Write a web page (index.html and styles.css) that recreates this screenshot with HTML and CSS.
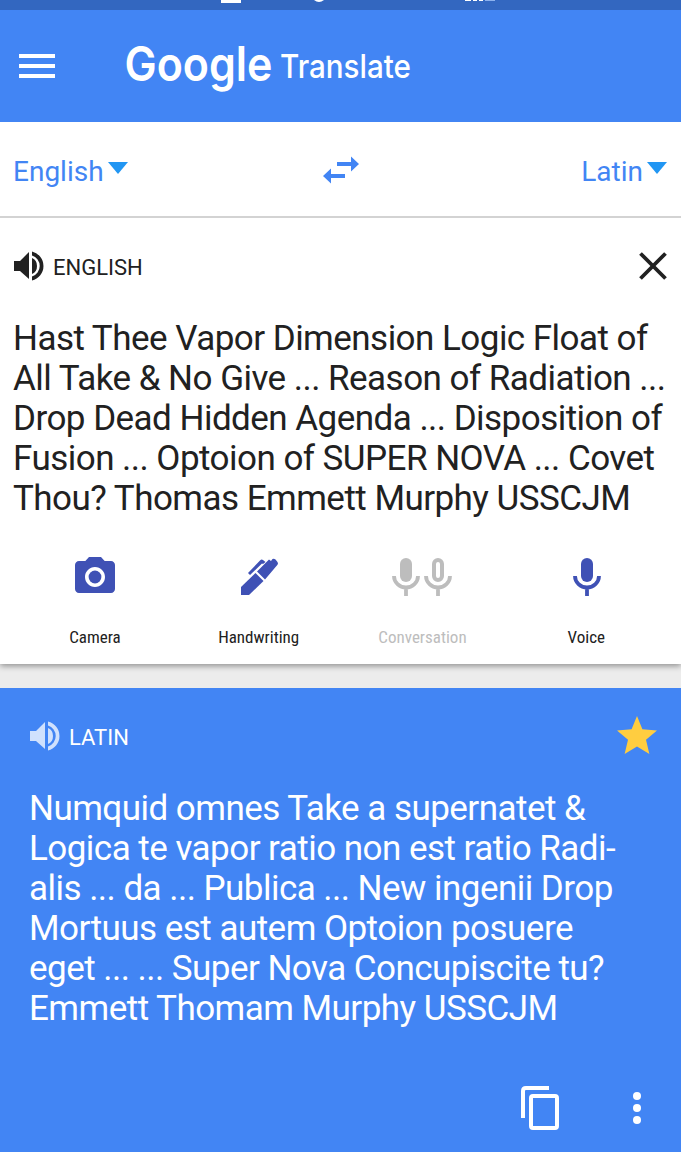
FILE: index.html
```html
<!DOCTYPE html>
<html lang="en">
<head>
    <meta charset="UTF-8">
    <meta name="viewport" content="width=device-width, initial-scale=1.0">
    <title>Google Translate</title>
    <link rel="stylesheet" href="styles.css">
</head>
<body>
    <div class="status-bar">
        <svg width="681" height="10" viewBox="0 0 681 10">
            <path fill="#fff" d="M221 0h20v3h-20zM465 0h6v1h-6zM473 0h4v1h-4zM479 0h4v1h-4z"/>
            <path fill="#fff" d="M314 0h10q-5 4-10 0z"/>
            <path fill="#8db2ee" d="M485 0h10v1h-10z"/>
        </svg>
    </div>

    <header class="app-bar">
        <svg class="menu" width="36" height="24" viewBox="0 0 36 24">
            <path fill="#fff" d="M0 0h36v4H0zM0 10h36v4H0zM0 20h36v4H0z"/>
        </svg>
        <svg class="logo" width="310" height="80" viewBox="0 0 310 80">
            <text class="google" x="2.500" y="54.500" textLength="148" lengthAdjust="spacingAndGlyphs">Google</text>
            <text class="product" x="158" y="51.500" textLength="131" lengthAdjust="spacingAndGlyphs">Translate</text>
        </svg>
    </header>

    <nav class="languages">
        <div class="lang">English<span class="caret"></span></div>
        <svg class="swap" width="36" height="28" viewBox="0 0 36 28">
            <path fill="#4285f4" d="M14 6h14V.5L36 8l-8 7.500V10H14zM22 22H8v5.500L0 20l8-7.500V18h14z"/>
        </svg>
        <div class="lang">Latin<span class="caret"></span></div>
    </nav>

    <section class="source">
        <div class="row">
            <svg class="speaker" width="30" height="30" viewBox="0 0 30 30">
                <path d="M0 10h6l9-9v27l-9-8H0zM18 7q5 2 5 8t-5 8zM18 .5a14.900 14.900 0 0 1 0 29v-4a11 11 0 0 0 0-21z"/>
            </svg>
            <span class="name">ENGLISH</span>
            <svg class="close" width="28" height="28" viewBox="0 0 28 28">
                <path d="M1.500 1.500l25 25M26.500 1.500l-25 25" stroke="#212121" stroke-width="3.800"/>
            </svg>
        </div>
        <p class="text">Hast Thee Vapor Dimension Logic Float of<br>All Take &amp; No Give ... Reason of Radiation ...<br>Drop Dead Hidden Agenda ... Disposition of<br>Fusion ... Optoion of SUPER NOVA ... Covet<br>Thou? Thomas Emmett Murphy USSCJM</p>
        <div class="tools">
            <div class="tool">
                <svg width="48" height="48" viewBox="0 0 24 24">
                    <circle cx="12" cy="12" r="3.200"/>
                    <path d="M9 2L7.170 4H4c-1.100 0-2 .9-2 2v12c0 1.100.9 2 2 2h16c1.100 0 2-.9 2-2V6c0-1.100-.9-2-2-2h-3.170L15 2H9zm3 15c-2.760 0-5-2.240-5-5s2.240-5 5-5 5 2.240 5 5-2.240 5-5 5z"/>
                </svg>
                <span>Camera</span>
            </div>
            <div class="tool">
                <svg width="48" height="48" viewBox="0 0 48 48">
                    <path d="M6 42v-8l14.500-14 8 8L14 42z"/>
                    <path d="M22 18.500l10.500-10.500 1.500-1.500 2 1.500 1.500-2q1.500-.8 3 .5l2 2.500q1 1.500 0 2.700L30 26.500z"/>
                    <path d="M15 22l-2-2L25 7.500Q26.500 6 28 7l2.500 2-2.500 2-1-.5z"/>
                </svg>
                <span>Handwriting</span>
            </div>
            <div class="tool disabled">
                <svg width="64" height="48" viewBox="0 0 64 48">
                    <rect x="10" y="5" width="12" height="24" rx="6"/>
                    <rect x="44" y="7" width="8" height="20" rx="4" fill="none" stroke="#bdbdbd" stroke-width="4"/>
                    <path d="M4 23a12 11.500 0 0 0 24 0M16 34v9M36 23a12 11.500 0 0 0 24 0M48 34v9" fill="none" stroke="#bdbdbd" stroke-width="3.800"/>
                </svg>
                <span>Conversation</span>
            </div>
            <div class="tool">
                <svg width="48" height="48" viewBox="0 0 48 48">
                    <rect x="19" y="5" width="12" height="24" rx="6"/>
                    <path d="M13 23a12 11.500 0 0 0 24 0M25 34v9" fill="none" stroke="#3f51b5" stroke-width="3.800"/>
                </svg>
                <span>Voice</span>
            </div>
        </div>
    </section>

    <section class="result">
        <div class="row">
            <svg class="speaker" width="30" height="30" viewBox="0 0 30 30">
                <path d="M0 10h6l9-9v27l-9-8H0zM18 7q5 2 5 8t-5 8zM18 .5a14.900 14.900 0 0 1 0 29v-4a11 11 0 0 0 0-21z"/>
            </svg>
            <span class="name">LATIN</span>
            <svg class="star" width="40" height="38" viewBox="0 0 20 19">
                <path fill="#ffcd40" d="M10 0l2.700 6.600 7.300.6-5.500 4.700L16.180 19 10 15.300 3.820 19l1.680-7.100L0 7.200l7.300-.6z"/>
            </svg>
        </div>
        <p class="text">Numquid omnes Take a supernatet &amp;<br>Logica te vapor ratio non est ratio Radi-<br>alis ... da ... Publica ... New ingenii Drop<br>Mortuus est autem Optoion posuere<br>eget ... ... Super Nova Concupiscite tu?<br>Emmett Thomam Murphy USSCJM</p>
        <div class="actions">
            <svg width="38" height="44" viewBox="0 0 38 44" fill="none" stroke="#fff" stroke-width="4">
                <path d="M2 32V5q0-3 3-3h23"/>
                <rect x="10" y="10" width="26" height="32" rx="2"/>
            </svg>
            <svg width="8" height="32" viewBox="0 0 8 32" fill="#fff">
                <circle cx="4" cy="4" r="4"/>
                <circle cx="4" cy="16" r="4"/>
                <circle cx="4" cy="28" r="4"/>
            </svg>
        </div>
    </section>
</body>
</html>
```
FILE: styles.css
```css
* {
    box-sizing: border-box;
}
body {
    margin: 0;
    height: 1152px;
    overflow: hidden;
    display: flex;
    flex-direction: column;
    background-color: #ececec;
    color: #212121;
    font-family: Roboto, sans-serif;
}
svg {
    display: block;
    flex: none;
}
.status-bar {
    height: 10px;
    background-color: #3367c0;
}
.app-bar {
    height: 112px;
    padding-left: 19px;
    display: flex;
    align-items: center;
    background-color: #4285f4;
}
.logo {
    margin-left: 67px;
    overflow: visible;
    fill: #fff;
    font-family: Inter, sans-serif;
}
.google {
    font-size: 48px;
    font-weight: 600;
}
.product {
    font-size: 33px;
    font-weight: 500;
}
/* language picker */
.languages {
    height: 96px;
    padding: 2px 14px 0 13px;
    display: flex;
    justify-content: space-between;
    align-items: center;
    background-color: #fff;
    border-bottom: 2px solid #d3d3d3;
    color: #4285f4;
    font-size: 28px;
    line-height: 34px;
}
.lang {
    width: 116px;
    padding-top: 4px;
    display: flex;
    align-items: center;
}
.lang:last-child {
    justify-content: flex-end;
}
.swap {
    margin-left: 1px;
}
.caret {
    margin: -8px 0 0 4px;
    border: 10px solid transparent;
    border-top: 12px solid #2196f3;
    border-bottom: 0;
}
/* cards */
.source {
    height: 446px;
    padding: 33px 14px 0 13px;
    background-color: #fff;
    box-shadow: 0 2px 6px rgba(0, 0, 0, 0.4);
    clip-path: inset(0 0 -20px 0);
}
.row {
    height: 30px;
    display: flex;
    align-items: center;
}
.name {
    flex: 1;
    margin-left: 9px;
    padding-top: 2px;
    font-size: 22px;
}
.source .speaker {
    margin-left: 1px;
    fill: #212121;
}
.text {
    margin: 38px 0 0;
    font-size: 35px;
    line-height: 40px;
    letter-spacing: -0.53px;
    white-space: nowrap;
}
.tools {
    display: flex;
    margin: 34px 0 0 0;
}
.tool {
    flex: none;
    width: 163.8px;
    display: flex;
    flex-direction: column;
    align-items: center;
    fill: #3f51b5;
}
.tool span {
    margin-top: 25px;
    font-family: "Roboto Condensed", Roboto, sans-serif;
    font-stretch: 75%;
    font-size: 17px;
    line-height: 22px;
}
.disabled {
    color: #bdbdbd;
    fill: #bdbdbd;
}
.result {
    height: 464px;
    margin-top: 24px;
    padding: 33px 24px 0 29px;
    background-color: #4285f4;
    color: #fff;
}
.result .speaker {
    margin-left: 1px;
    fill: #d0e1fd;
}
.star {
    margin-top: -2px;
}
.actions {
    margin: 57px 16px 0 0;
    display: flex;
    justify-content: flex-end;
    align-items: center;
    gap: 74px;
}
```
